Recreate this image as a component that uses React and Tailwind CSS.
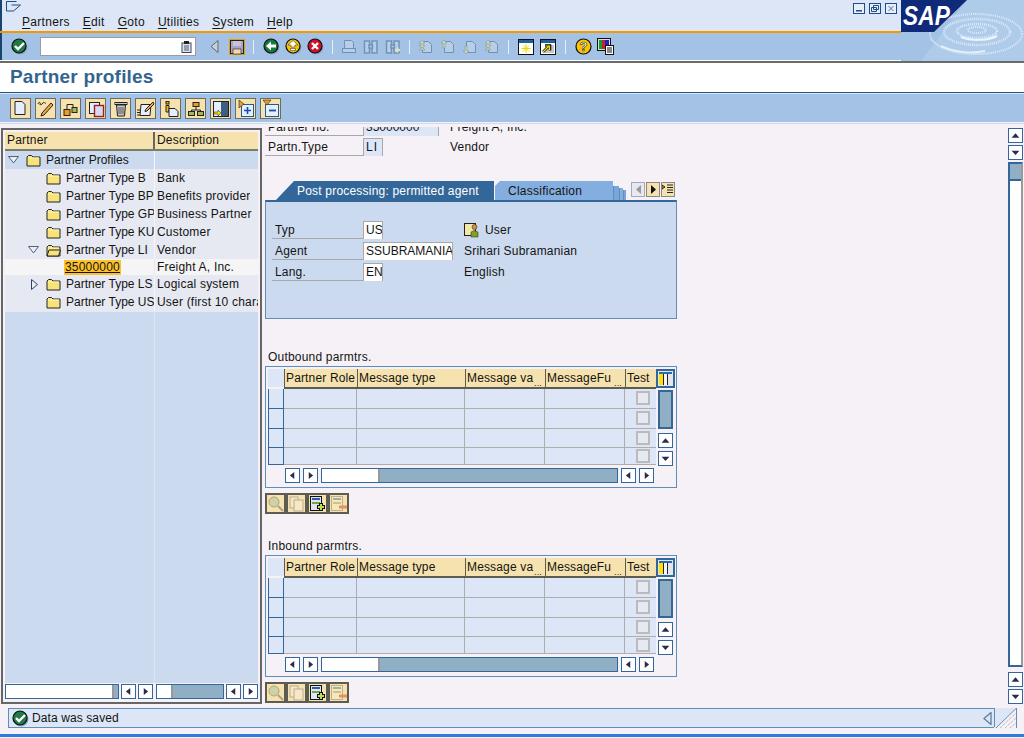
import React from "react";

const Round = ({ fill, children }) => (
  <svg width="17" height="17" viewBox="0 0 17 17" className="block shrink-0">
    <circle cx="9" cy="9" r="7.5" fill="#8aa3c8" />
    <circle cx="8" cy="8" r="7" fill={fill} stroke="#101010" strokeWidth="1.2" />
    {children}
  </svg>
);
const CheckIcon = () => (
  <Round fill="#1f7a45"><path d="M4 8l3 3 6-6" fill="none" stroke="#fff" strokeWidth="2.4" /></Round>
);
const BackIcon = () => (
  <Round fill="#157a3c"><path d="M3 8l5-4.5v3h5v3H8v3z" fill="#fff" /></Round>
);
const UpIcon = () => (
  <Round fill="#f5c400"><path d="M8 2.5L13 7h-3v2H6V7H3zM5.5 10.5h5v2h-5z" fill="#fff" stroke="#222" strokeWidth=".5" /></Round>
);
const CancelIcon = () => (
  <Round fill="#d0102a"><path d="M5 5l6 6M11 5l-6 6" stroke="#fff" strokeWidth="2.4" /></Round>
);
const SaveIcon = () => (
  <svg width="16" height="16" viewBox="0 0 16 16" className="block">
    <rect x=".5" y=".5" width="15" height="15" fill="#a9a3c4" stroke="#f09a00" strokeWidth="1" />
    <rect x="1.500" y="1.500" width="13" height="13" fill="none" stroke="#222" strokeWidth="1" />
    <rect x="4" y="2" width="8" height="5" fill="#c8c0dc" />
    <rect x="4" y="10" width="8" height="5" fill="#f6d9a0" stroke="#222" strokeWidth=".6" />
  </svg>
);
const Sep = ({ c = "" }) => <div className={`w-[1px] h-[14px] bg-[#e8eef8] shrink-0 ${c}`} />;

const Dim = ({ kind }) => {
  const s = "#6c92b6";
  return (
    <svg width="16" height="16" viewBox="0 0 16 16" className="block">
      {kind === "print" && (
        <g fill="#b9cde6" stroke={s}>
          <path d="M3.5 1.5h7l2 2v6h-9z" />
          <rect x="1.5" y="9.5" width="13" height="4" />
        </g>
      )}
      {(kind === "find" || kind === "findn") && (
        <g fill="#b9cde6" stroke={s} strokeWidth="1.4">
          <rect x="1.5" y="2" width="5" height="12" />
          <rect x="9" y="2" width="5" height="12" />
          <rect x="6" y="6" width="3.5" height="3" />
        </g>
      )}
      {kind === "findn" && <path d="M10 11h5M12.5 8.5v5" stroke="#d8e2c8" strokeWidth="2" />}
      {kind !== "print" && kind !== "find" && kind !== "findn" && (
        <g>
          <path d="M4.5 2.5h6l3 3v8h-9z" fill="#b9cde6" stroke={s} />
          {kind === "prev" && <path d="M4 1l3 3H5v5H3V4H1z" fill="#cfd4a0" stroke={s} strokeWidth=".5" />}
          {kind === "next" && <path d="M4 15l3-3H5V7H3v5H1z" fill="#cfd4a0" stroke={s} strokeWidth=".5" />}
          {(kind === "first" || kind === "last") && (
            <path d="M4 1l3 3H5v2.5h2L4 9.5 1 6.500h2V4H1zM4 8l3 3H1z" fill="#cfd4a0" stroke={s} strokeWidth=".5" />
          )}
        </g>
      )}
    </svg>
  );
};

const Session = ({ arrow }) => (
  <svg width="16" height="16" viewBox="0 0 16 16" className="block">
    <rect x=".5" y=".5" width="15" height="15" fill="#fff" stroke="#111" />
    <rect x="1" y="1" width="14" height="3" fill="#1d5fa0" />
    {arrow ? (
      <g>
        <rect x="5" y="6" width="9" height="8" fill="#c8c8c8" />
        <path d="M3 13l6-6M5 6.500h5v5" fill="none" stroke="#111" strokeWidth="2.6" />
        <path d="M3 13l6-6M5.500 7h4v4" fill="none" stroke="#f4e400" strokeWidth="1.2" />
      </g>
    ) : (
      <path d="M8 5v9M3.500 9.500h9M5 6.500l6 6M11 6.500l-6 6" stroke="#e8d800" strokeWidth="1" />
    )}
  </svg>
);
const Help = () => (
  <svg width="17" height="17" viewBox="0 0 17 17" className="block">
    <circle cx="8.500" cy="8.500" r="7.500" fill="#f9c400" stroke="#111" strokeWidth="1.2" />
    <text x="8.500" y="13" textAnchor="middle" fontSize="13" fontWeight="bold" fontFamily="Liberation Sans" fill="#fff" stroke="#111" strokeWidth=".5">?</text>
  </svg>
);
const Layout = () => (
  <svg width="17" height="17" viewBox="0 0 17 17" className="block">
    <rect x=".5" y=".5" width="13" height="12" fill="#ddd" stroke="#111" />
    <rect x="2" y="2" width="3" height="9" fill="#10a030" />
    <rect x="5" y="2" width="3" height="9" fill="#d02020" />
    <rect x="8" y="2" width="4" height="9" fill="#2020d0" />
    <rect x="8.500" y="7.500" width="8" height="9" fill="#fff" stroke="#111" />
    <path d="M10 10h5M10 12h5M10 14h5" stroke="#111" />
  </svg>
);

const AppIcon = ({ k }) => {
  const st = "#222";
  const art = {
    doc: <path d="M4 2.500h7l3 3v10H4z" fill="#e4eeff" stroke={st} />,
    edit: (
      <g>
        <path d="M2 5c1-3 3-1 2 0s2 1 3-1 2 1 3 0" fill="none" stroke={st} />
        <path d="M15 4l2 2-9 10-3 1 1-3z" fill="#f2a83c" stroke={st} />
      </g>
    ),
    tree: (
      <g stroke={st}>
        <path d="M6 10V5.500h6V9" fill="none" />
        <rect x="3" y="10.500" width="6" height="6" fill="#f09a20" />
        <rect x="11" y="8.500" width="5" height="5" fill="#a0bc50" />
      </g>
    ),
    copy: (
      <g>
        <rect x="3.500" y="3.500" width="10" height="11" fill="#e4eeff" stroke={st} />
        <rect x="8.500" y="6.500" width="9" height="11" fill="#d8d8ee" stroke="#a02020" strokeWidth="1.4" />
      </g>
    ),
    trash: (
      <g fill="#c8c8c8" stroke={st}>
        <rect x="4" y="3.500" width="12" height="2" />
        <path d="M5.500 6h9l-1 11h-7z" />
        <path d="M8 8v7M10 8v7M12 8v7" fill="none" stroke="#555" />
      </g>
    ),
    change: (
      <g>
        <path d="M5 5.500h10l-1 11H4z" fill="#e4eeff" stroke={st} />
        <path d="M17 3l1 2-7 7-2 .5.5-2z" fill="#f2a83c" stroke={st} />
        <path d="M1 11h3M1 13.500h3M1 16h3" stroke={st} />
      </g>
    ),
    info: (
      <g stroke={st}>
        <rect x="5" y="2.500" width="3" height="2.500" fill="#f2c000" />
        <path d="M5 6.500h3V13H5z" fill="#f2c000" />
        <path d="M8 9.500h6l3 3v5H8z" fill="#e4eeff" />
      </g>
    ),
    org: (
      <g stroke={st}>
        <rect x="7" y="3.500" width="6" height="4" fill="#f09a20" />
        <path d="M10 8v3M5.500 13v-2h9v2" fill="none" />
        <rect x="2.500" y="12.500" width="6" height="4" fill="#a0bc50" />
        <rect x="11.500" y="12.500" width="6" height="4" fill="#a0bc50" />
      </g>
    ),
    trans: (
      <g>
        <rect x="2.500" y="2.500" width="15" height="15" fill="#e4eeff" stroke={st} />
        <rect x="10" y="3" width="7" height="14" fill="#3c5f80" />
        <path d="M3 13h4v-2l3 3-3 3v-2H3z" fill="#f2e000" stroke={st} strokeWidth=".5" />
      </g>
    ),
    expand: (
      <g>
        <rect x="5.500" y="5.500" width="12" height="12" fill="#e4eeff" stroke="#1d5f90" />
        <path d="M3 1l5 4-5 4z" fill="#f09a20" stroke={st} strokeWidth=".6" />
        <path d="M11.500 8v7M8 11.500h7" stroke="#1d4fa0" strokeWidth="1.6" />
      </g>
    ),
    collapse: (
      <g>
        <rect x="4.500" y="5.500" width="13" height="12" fill="#e4eeff" stroke="#1d5f90" />
        <path d="M2 1h8L6 6z" fill="#f09a20" stroke={st} strokeWidth=".6" />
        <path d="M8 11.500h7" stroke="#1d4fa0" strokeWidth="1.8" />
      </g>
    ),
  }[k];
  return (
    <div className="w-[21px] h-[21px] bg-[#f6e2ae] border border-[#6b6b60] flex items-center justify-center shrink-0">
      <svg width="19" height="19" viewBox="0 0 19 19" className="block">{art}</svg>
    </div>
  );
};

const Folder = ({ open }) => (
  <svg width="15" height="13" viewBox="0 0 15 13" className="block shrink-0">
    <path d="M1 3l1.500-1.500h3L7 3h7v9H1z" fill="#f8e27a" stroke="#222" />
    <path d="M2 4h11" stroke="#fff6c0" />
    {open && <path d="M1 12l2-6h11.500l-2 6z" fill="#f8e27a" stroke="#222" />}
  </svg>
);

const TriDown = () => (
  <svg width="11" height="8" viewBox="0 0 11 8" className="block shrink-0">
    <path d="M.5 .5h10L5.500 7z" fill="#e8edf6" stroke="#55607a" />
  </svg>
);
const TriRight = () => (
  <svg width="7" height="11" viewBox="0 0 7 11" className="block shrink-0">
    <path d="M.5 .5L6.500 5.500.5 10.500z" fill="#e8edf6" stroke="#35406a" />
  </svg>
);

const Arrow = ({ d, w = "w-[15px]" }) => {
  const p = { l: "M9.500 3v8L4.500 7z", r: "M5.500 3v8l5-4z", u: "M7.500 4.500l4.500 5H3z", d: "M3 5h9l-4.500 5z" }[d];
  return (
    <div className={`${w} h-[15px] bg-white border border-[#336799] shrink-0`}>
      <svg width="13" height="13" viewBox="0 0 15 14" className="block">
        <path d={p} fill="#2b2b50" />
      </svg>
    </div>
  );
};

const TreeRow = ({ indent, tri, open, label, desc, bg = "bg-[#e6e9f1]" }) => (
  <div className={`flex h-[18px] ${bg} items-center`}>
    <div className="w-[150px] flex items-center h-full border-r border-[#f5f6fa] whitespace-nowrap shrink-0 overflow-hidden tracking-[0px]">
      <div className={`${indent} flex items-center shrink-0`}>{tri}</div>
      <Folder open={open} />
      <span className="ml-[5px]">{label}</span>
    </div>
    <span className="ml-[2px] whitespace-nowrap overflow-hidden">{desc}</span>
  </div>
);

const Field = ({ w, children, bg = "bg-white", t = "tracking-[0px]" }) => (
  <div className={`${w} h-[18px] ${bg} border-l border-r border-t border-[#a8a8a8] px-[2px] leading-[17px] overflow-hidden whitespace-nowrap ${t} shrink-0`}>
    {children}
  </div>
);
const Label = ({ w, children, pl = "pl-[3px]" }) => (
  <div className={`${w} h-[18px] border-b border-[#a8a8a8] ${pl} leading-[19px] shrink-0`}>{children}</div>
);

const SmallTool = ({ children }) => (
  <div className="w-[21px] h-[21px] bg-[#f6e2ae] border-2 border-[#5c5c50] flex items-center justify-center shrink-0">
    <svg width="17" height="17" viewBox="0 0 17 17" className="block">{children}</svg>
  </div>
);

const Hdr = ({ children, dots }) => (
  <div className="relative bg-[#f6e2ae] border-l border-[#5c5c50] border-b-2 pl-[1px] leading-[18px] overflow-hidden whitespace-nowrap tracking-[0.15px]">
    {children}
    {dots && <span className="absolute right-[3px] bottom-[-1px] text-[9px] leading-[9px]">...</span>}
  </div>
);

const Cell = () => <div className="border-b border-r border-[#adadad]" />;

const Check = () => (
  <div className="flex items-center justify-center border-b border-[#adadad] pl-[5px]">
    <div className="w-[14px] h-[14px] bg-[#e6e9f1] border-2 border-[#bbb]" />
  </div>
);

const ColIcon = () => (
  <svg width="19" height="19" viewBox="0 0 19 19" className="block">
    <rect x="1" y="1" width="17" height="17" fill="#dce6f6" stroke="#336799" strokeWidth="2" />
    <rect x="3" y="3" width="13" height="2" fill="#2a6ab0" />
    <rect x="3" y="5" width="4" height="11" fill="#ffe000" />
    <rect x="7" y="5" width="1" height="11" fill="#222" />
    <rect x="8" y="5" width="3" height="11" fill="#f4f5f8" />
    <rect x="11" y="5" width="1" height="11" fill="#222" />
    <rect x="12" y="5" width="4" height="11" fill="#e4e6ec" />
  </svg>
);

const ParamTable = ({ title, top }) => (
  <div className={top}>
    <div className="h-[17px] pl-[3px] leading-[17px]">{title}</div>
    <div className="w-[412px] h-[122px] border border-[#5f8fb8] p-[2px] flex">
      <div className="w-[388px] flex flex-col">
        <div className="grid grid-cols-[16px_73px_108px_80px_80px_31px] h-[20px]">
          <div className="bg-[#dce6f6] border-b-2 border-[#f5f1f6]" />
          <Hdr>Partner Role</Hdr>
          <Hdr>Message type</Hdr>
          <Hdr dots>Message va</Hdr>
          <Hdr dots>MessageFu</Hdr>
          <Hdr>Test</Hdr>
        </div>
        {[20, 20, 20, 17].map((h, i) => (
          <div key={i} style={{ height: h }} className="grid grid-cols-[16px_73px_108px_80px_80px_31px] bg-[#dce6f6]">
            <div className="border border-t-0 border-[#336799]" />
            <Cell />
            <Cell />
            <Cell />
            <Cell />
            <Check />
          </div>
        ))}
        <div className="flex items-center h-[20px] pt-[1px] pl-[17px]">
          <Arrow d="l" />
          <div className="w-[3px]" />
          <Arrow d="r" />
          <div className="ml-[3px] w-[297px] h-[15px] border border-[#336799] bg-[#90afc4] flex">
            <div className="w-[58px] bg-white border-r-2 border-[#999]" />
          </div>
          <div className="w-[3px]" />
          <Arrow d="l" />
          <div className="w-[3px]" />
          <Arrow d="r" />
        </div>
      </div>
      <div className="w-[20px] flex flex-col items-center">
        <ColIcon />
        <div className="mt-[2px] w-[15px] h-[39px] bg-[#90afc4] border-2 border-[#336799]" />
        <div className="mt-[4px]"><Arrow d="u" /></div>
        <div className="mt-[3px]"><Arrow d="d" /></div>
      </div>
    </div>
    <div className="flex mt-[5px]">
      <SmallTool>
        <g opacity=".45"><circle cx="7" cy="7" r="5" fill="#a0c0a0" stroke="#555" /><path d="M11 11l5 5" stroke="#555" strokeWidth="2" /></g>
      </SmallTool>
      <SmallTool>
        <g opacity=".45" fill="#f8f0d8" stroke="#76688a"><rect x="2" y="2" width="8" height="11" /><rect x="6" y="5" width="9" height="11" /></g>
      </SmallTool>
      <SmallTool>
        <rect x="1.500" y="1.500" width="11" height="14" fill="#dce6f6" stroke="#111" />
        <path d="M3 4h8" stroke="#3060a0" strokeWidth="2" />
        <path d="M3 8h8" stroke="#80a040" strokeWidth="2" />
        <path d="M12 8v8M8 12h8" stroke="#111" strokeWidth="4" />
        <path d="M12 9v6M9 12h6" stroke="#b8e050" strokeWidth="2" />
      </SmallTool>
      <SmallTool>
        <g opacity=".4">
          <rect x="1.500" y="1.500" width="11" height="14" fill="#f8f0d8" stroke="#665" />
          <path d="M3 4h8" stroke="#3060a0" strokeWidth="2" />
          <path d="M3 8h8" stroke="#80a040" strokeWidth="2" />
        </g>
        <path d="M9 12h8" stroke="#e89060" strokeWidth="3" />
      </SmallTool>
    </div>
  </div>
);

const Logo = () => (
  <svg width="123" height="61" viewBox="0 0 123 61" className="absolute top-0 right-0 block">
    <rect width="123" height="61" fill="#a4c2e6" />
    <path d="M66 0H123V61H20z" fill="#aecbea" />
    <g fill="none" stroke="#dfeaf8" strokeDasharray="1 1">
      <ellipse cx="76" cy="30" rx="9" ry="3" strokeWidth="2" />
      <ellipse cx="76" cy="31" rx="20" ry="7" strokeWidth="2.500" />
      <ellipse cx="76" cy="32" rx="33" ry="13" strokeWidth="2.500" />
      <ellipse cx="75" cy="34" rx="46" ry="20" strokeWidth="2" />
    </g>
    <path d="M60 37c10 4 26 4 36-1" fill="none" stroke="#eef4fb" strokeWidth="2" />
    <path d="M40 46c12 6 30 8 44 5" fill="none" stroke="#e6eff9" strokeWidth="2" />
    <path d="M0 0H66L33 32H0z" fill="#0f2a78" />
    <text x="2" y="25" textLength="47" lengthAdjust="spacingAndGlyphs" fontFamily="Liberation Sans" fontWeight="bold" fontStyle="italic" fontSize="27" fill="#fff">SAP</text>
  </svg>
);

const WinBtn = ({ children }) => (
  <svg width="12" height="11" viewBox="0 0 12 11" className="block shrink-0">
    <rect x=".5" y=".5" width="11" height="10" fill="#e8eef8" stroke="#1d4f90" />
    {children}
  </svg>
);

const Menu = ({ ml, u, rest }) => (
  <span className={`${ml} whitespace-nowrap`}>
    <span className="underline underline-offset-2">{u}</span>
    {rest}
  </span>
);

export default function App() {
  return (
    <div className="relative w-[1024px] h-[738px] overflow-hidden bg-[#f5f1f6] [font-family:Liberation_Sans,sans-serif] text-[12px] tracking-[0.2px] text-[#141414]">
      {/* menu bar */}
      <div className="h-[31px] bg-[#dce6f6] border-l-2 border-[#17456e] relative">
        <svg width="16" height="11" viewBox="0 0 16 11" className="absolute left-[4px] top-[1px] block">
          <path d="M.5 .5h10M.5 .5v9.500h7L14.500 4h-9" fill="none" stroke="#1d4f80" strokeWidth="1" />
        </svg>
        <div className="flex pl-[20px] pt-[15px] leading-[15px] tracking-[0.3px]">
          <Menu u="P" rest="artners" />
          <Menu ml="ml-[13px]" u="E" rest="dit" />
          <Menu ml="ml-[13px]" u="G" rest="oto" />
          <Menu ml="ml-[13px]" u="U" rest="tilities" />
          <Menu ml="ml-[13px]" u="S" rest="ystem" />
          <Menu ml="ml-[13px]" u="H" rest="elp" />
        </div>
        <div className="absolute left-[851px] top-[3px] flex gap-[4px]">
          <WinBtn><rect x="3" y="7" width="6" height="1.500" fill="#1d4f90" /></WinBtn>
          <WinBtn><path d="M4.500 2.500h5v4h-5zM2.500 4.500h5v4h-5z" fill="#e8eef8" stroke="#1d4f90" /></WinBtn>
          <WinBtn><path d="M3.500 3l5 5M8.500 3l-5 5" stroke="#4a70a0" /></WinBtn>
        </div>
      </div>
      <div className="h-[2px] bg-[#f09a00]" />
      {/* system toolbar */}
      <div className="h-[27px] bg-[#a4c2e6] border-l-2 border-[#17456e] flex items-center pl-[9px]">
        <CheckIcon />
        <div className="ml-[12px] w-[156px] h-[19px] bg-white border border-[#9c9c9c] flex items-center justify-end pr-[3px]">
          <svg width="11" height="12" viewBox="0 0 11 12" className="block">
            <rect x="1" y="2" width="9" height="9.500" fill="#dce6f6" stroke="#445" />
            <rect x="3" y="0" width="5" height="3" fill="#222" />
            <path d="M3 5h5M3 7h5M3 9h5" stroke="#556" />
          </svg>
        </div>
        <svg width="9" height="13" viewBox="0 0 9 13" className="ml-[14px] block">
          <path d="M8 .5v12L1 6.500z" fill="#c6cfd8" stroke="#666" />
        </svg>
        <div className="ml-[10px]"><SaveIcon /></div>
        <Sep c="ml-[8px]" />
        <div className="ml-[9px]"><BackIcon /></div>
        <div className="ml-[5px]"><UpIcon /></div>
        <div className="ml-[5px]"><CancelIcon /></div>
        <Sep c="ml-[8px]" />
        <div className="ml-[8px]"><Dim kind="print" /></div>
        <div className="ml-[6px]"><Dim kind="find" /></div>
        <div className="ml-[6px]"><Dim kind="findn" /></div>
        <Sep c="ml-[8px]" />
        <div className="ml-[8px]"><Dim kind="first" /></div>
        <div className="ml-[6px]"><Dim kind="prev" /></div>
        <div className="ml-[6px]"><Dim kind="next" /></div>
        <div className="ml-[6px]"><Dim kind="last" /></div>
        <Sep c="ml-[8px]" />
        <div className="ml-[9px]"><Session /></div>
        <div className="ml-[6px]"><Session arrow /></div>
        <Sep c="ml-[9px]" />
        <div className="ml-[9px]"><Help /></div>
        <div className="ml-[5px]"><Layout /></div>
      </div>
      <div className="h-[1px] bg-white" />
      <div className="h-[2px] bg-[#6a6a6a]" />
      {/* title */}
      <div className="h-[29px] bg-white pl-[10px] flex items-center text-[19px] font-bold tracking-[0.2px] text-[#336490]">
        Partner profiles
      </div>
      <div className="h-[1px] bg-[#1d5587]" />
      <div className="h-[1px] bg-[#dce6f6]" />
      {/* application toolbar */}
      <div className="h-[28px] bg-[#a4c2e6] flex items-center pl-[10px] gap-[4px]">
        {["doc", "edit", "tree", "copy", "trash", "change", "info", "org", "trans", "expand", "collapse"].map((k) => (
          <AppIcon key={k} k={k} />
        ))}
      </div>
      <div className="h-[1px] bg-[#f5f1f6]" />
      <div className="h-[1px] bg-[#c8dcf2]" />
      {/* main */}
      <div className="flex h-[584px] pl-[1px]">
        <div className="mt-[4px] w-[261px] h-[576px] border-2 border-[#666] bg-[#f5f1f6] p-[2px] flex flex-col">
          <div className="flex h-[19px] border-b-2 border-b-[#7b7b6a] bg-[#f6e2ae] shrink-0">
            <div className="w-[150px] border-r-2 border-[#666] pl-[2px] leading-[17px]">Partner</div>
            <div className="pl-[2px] leading-[17px]">Description</div>
          </div>
          <div className="flex-1 flex flex-col bg-[#cbdaee]">
            <TreeRow bg="bg-[#cbdaee]" indent="w-[21px] pl-[3px]" tri={<TriDown />} label="Partner Profiles" desc="" />
            <TreeRow indent="w-[41px]" label="Partner Type B" desc="Bank" />
            <TreeRow indent="w-[41px]" label="Partner Type BP" desc="Benefits provider" />
            <TreeRow indent="w-[41px]" label="Partner Type GP" desc="Business Partner" />
            <TreeRow indent="w-[41px]" label="Partner Type KU" desc="Customer" />
            <TreeRow indent="w-[41px] pl-[23px]" tri={<TriDown />} open label="Partner Type LI" desc="Vendor" />
            <div className="flex h-[16px] bg-[#f5f5f5] items-center">
              <div className="w-[150px] border-r border-[#e6e9f1] h-full flex items-center pl-[59px] shrink-0">
                <span className="bg-[#fcc22c] px-[1px] underline leading-[15px]">35000000</span>
              </div>
              <span className="ml-[2px]">Freight A, Inc.</span>
            </div>
            <TreeRow indent="w-[41px] pl-[26px]" tri={<TriRight />} label="Partner Type LS" desc="Logical system" />
            <TreeRow indent="w-[41px]" label="Partner Type US" desc="User (first 10 chara" />
            <div className="flex-1 flex border-t border-[#e6e9f1]">
              <div className="w-[150px] border-r border-[#dfe5f0]" />
            </div>
          </div>
          <div className="h-[17px] flex items-center shrink-0">
            <div className="w-[114px] h-[15px] border border-[#336799] bg-[#90afc4] flex">
              <div className="w-[108px] bg-white border-r-2 border-[#999]" />
            </div>
            <div className="w-[2px]" />
            <Arrow d="l" />
            <div className="w-[2px]" />
            <Arrow d="r" />
            <div className="w-[3px]" />
            <div className="w-[68px] h-[15px] border border-[#336799] bg-[#90afc4] flex">
              <div className="w-[16px] bg-white border-r-2 border-[#999]" />
            </div>
            <div className="w-[2px]" />
            <Arrow d="l" />
            <div className="w-[2px]" />
            <Arrow d="r" />
          </div>
        </div>
        {/* form */}
        <div className="ml-[3px] mt-[3px] w-[412px] overflow-hidden">
          <div className="flex -mt-[9px] h-[18px]">
            <Label w="w-[98px]">Partner no.</Label>
            <Field w="w-[76px]" bg="bg-[#dce6f6]">35000000</Field>
            <span className="ml-[11px] leading-[19px]">Freight A, Inc.</span>
          </div>
          <div className="flex mt-[2px] h-[18px]">
            <Label w="w-[98px]">Partn.Type</Label>
            <Field w="w-[20px]" bg="bg-[#dce6f6]" t="tracking-[1px]">LI</Field>
            <span className="ml-[67px] leading-[19px]">Vendor</span>
          </div>
          <div className="flex mt-[25px] h-[19px] items-end">
            <div className="ml-[11px] w-[218px] h-[19px] bg-[#336799] text-white pl-[21px] leading-[20px] tracking-[0.2px] whitespace-nowrap [clip-path:polygon(18px_0,100%_0,100%_100%,0_100%)]">
              Post processing: permitted agent
            </div>
            <div className="ml-[1px] w-[118px] h-[19px] bg-[#85aee0] pl-[13px] leading-[20px] tracking-[0.25px] [clip-path:polygon(5px_0,100%_0,100%_100%,0_100%,0_5px)]">
              Classification
            </div>
            <div className="w-[6px] h-[14px] bg-[#7ba5d8] border-l border-[#5f8fb8]" />
            <div className="w-[4px] h-[12px] bg-[#85aee0] border-l border-[#5f8fb8]" />
            <div className="w-[3px] h-[10px] bg-[#7ba5d8] border-l border-[#5f8fb8]" />
            <div className="ml-[5px] mb-[3px] flex gap-[1px]">
              <div className="w-[14px] h-[15px] bg-[#e6e9f1] border border-[#aaa] flex items-center justify-center">
                <svg width="5" height="9" viewBox="0 0 5 9" className="block"><path d="M5 0v9L0 4.500z" fill="#999" /></svg>
              </div>
              <div className="w-[14px] h-[15px] bg-[#f6e2ae] border border-[#888] flex items-center justify-center">
                <svg width="5" height="9" viewBox="0 0 5 9" className="block"><path d="M0 0v9l5-4.500z" fill="#111" /></svg>
              </div>
              <div className="w-[14px] h-[15px] bg-[#f6e2ae] border border-[#888] flex items-center justify-center">
                <svg width="12" height="11" viewBox="0 0 12 11" className="block"><path d="M0 1l3 2-3 2zM5 1h6M5 3.500h6M5 6h6M5 8.500h6" stroke="#222" fill="#f09a20" /></svg>
              </div>
            </div>
          </div>
          <div className="h-[119px] border border-[#5f8fb8] border-t-2 border-t-[#336799] bg-[#cbdaee] pl-[6px] pt-[19px]">
            <div className="flex h-[18px] mb-[3px]">
              <Label w="w-[91px]" pl="pl-[3px]">Typ</Label>
              <Field w="w-[20px]">US</Field>
              <svg width="16" height="16" viewBox="0 0 16 16" className="ml-[81px] mt-[1px] block">
                <rect x=".5" y="1.500" width="11" height="12" fill="#f4e8a8" stroke="#222" />
                <circle cx="10.500" cy="5" r="2.500" fill="#d09040" stroke="#222" strokeWidth=".5" />
                <path d="M7 15v-5l3-1.500L14 10v5z" fill="#80a020" stroke="#222" strokeWidth=".5" />
              </svg>
              <span className="ml-[5px] leading-[19px]">User</span>
            </div>
            <div className="flex h-[18px] mb-[3px]">
              <Label w="w-[91px]" pl="pl-[3px]">Agent</Label>
              <Field w="w-[90px]">SSUBRAMANIAN</Field>
              <span className="ml-[11px] leading-[19px] whitespace-nowrap">Srihari Subramanian</span>
            </div>
            <div className="flex h-[18px]">
              <Label w="w-[91px]" pl="pl-[3px]">Lang.</Label>
              <Field w="w-[20px]">EN</Field>
              <span className="ml-[81px] leading-[19px]">English</span>
            </div>
          </div>
          <ParamTable title="Outbound parmtrs." top="mt-[30px]" />
          <ParamTable title="Inbound parmtrs." top="mt-[24px]" />
        </div>
        <div className="flex-1" />
        {/* page scrollbar */}
        <div className="mr-[1px] w-[15px] mt-[3px] flex flex-col">
          <div className="h-[1px]" />
          <Arrow d="u" />
          <div className="h-[2px]" />
          <Arrow d="d" />
          <div className="h-[2px]" />
          <div className="flex-1 bg-white border-2 border-[#336799] border-r-[#999] flex flex-col">
            <div className="h-[17px] bg-[#90afc4] border-b-2 border-[#336799]" />
          </div>
          <div className="h-[5px]" />
          <Arrow d="u" />
          <div className="h-[2px]" />
          <Arrow d="d" />
          <div className="h-[4px]" />
        </div>
      </div>
      {/* status */}
      <div className="h-[21px] flex pl-[8px]">
        <div className="w-[1009px] h-[20px] border border-[#5f8fb8] bg-[#dce6f6] flex items-center pl-[3px] relative">
          <CheckIcon />
          <span className="ml-[3px] tracking-[0.1px]">Data was saved</span>
          <svg width="9" height="13" viewBox="0 0 9 13" className="absolute right-[24px] top-[3px] block">
            <path d="M8 .5v12L1 6.500z" fill="#dce6f6" stroke="#5f7f9c" strokeWidth="1.300" />
          </svg>
          <svg width="22" height="20" viewBox="0 0 22 20" className="absolute right-0 top-[-1px] block">
            <rect width="22" height="20" fill="#f5f1f6" />
            <path d="M0 20V0h22L2 20z" fill="#dce6f6" />
            <path d="M.5 19V0M22 .5L2 20" stroke="#5f8fb8" fill="none" />
            <path d="M6 20L22 5M11 20L22 10M16 20l6-5" stroke="#9aa0a8" strokeDasharray="1 1" fill="none" />
          </svg>
        </div>
      </div>
      <div className="h-[5px]" />
      <div className="h-[3px] bg-[#2f7cdc]" />
      <Logo />
    </div>
  );
}
